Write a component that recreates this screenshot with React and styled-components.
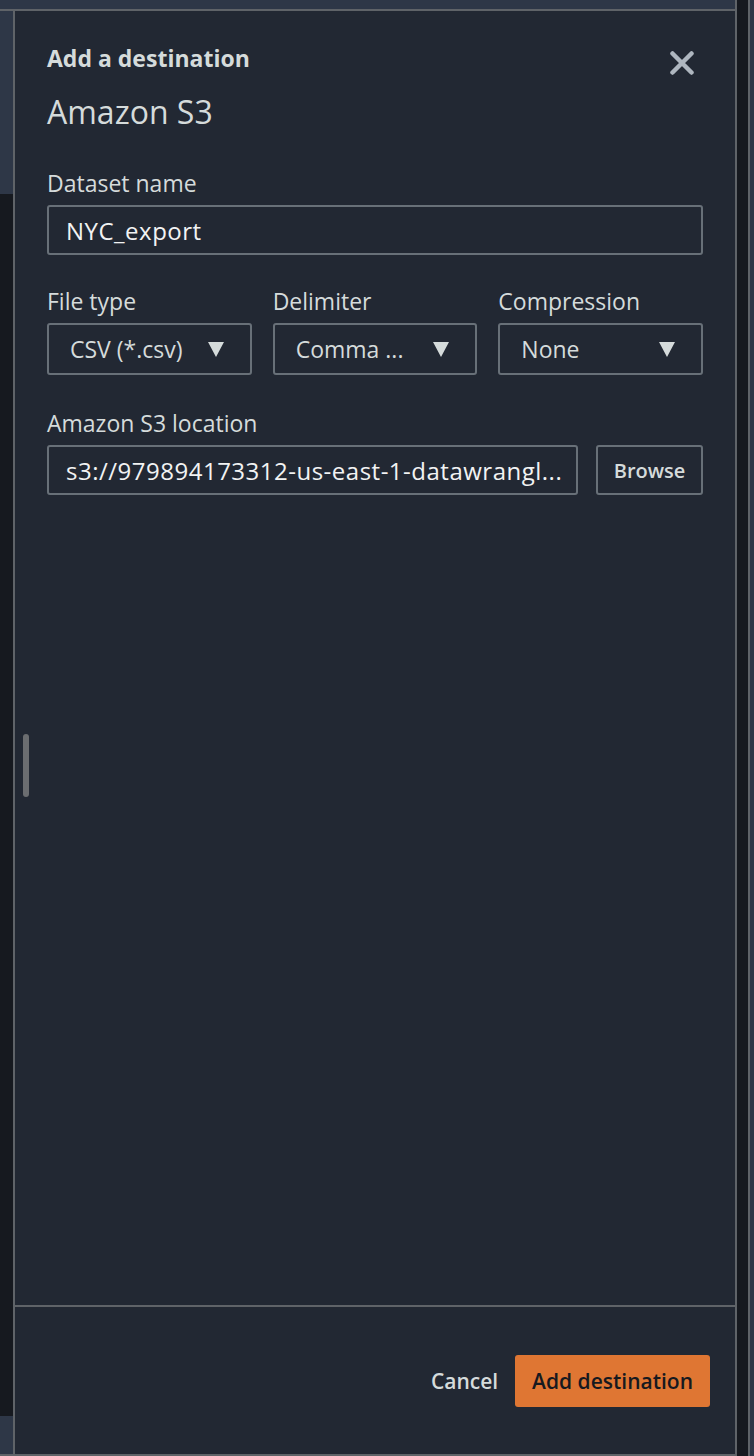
import React from "react"
import styled, { createGlobalStyle } from "styled-components"

const GlobalStyle = createGlobalStyle`
    html, body {
        margin: 0;
        padding: 0;
        background: #16191f;
    }
    * {
        box-sizing: border-box;
    }
`

const Frame = styled.div`
    display: flex;
    width: 754px;
    height: 1456px;
    font-family: "Open Sans", "Noto Sans", sans-serif;
    overflow: hidden;
`

const Main = styled.div`
    display: flex;
    flex-direction: column;
    width: 735px;
    height: 100%;
    border-bottom: 2px solid #5f6368;
`

const TopBand = styled.div`
    height: 11px;
    background: #2e3747;
    border-bottom: 2px solid #5f6368;
    flex-shrink: 0;
`

const Body = styled.div`
    display: flex;
    flex: 1;
    min-height: 0;
`

const Gutter = styled.div`
    display: flex;
    flex-direction: column;
    width: 13px;
    flex-shrink: 0;
`

const GutterSeg = styled.div`
    background: ${p => (p.$dark ? "#16191f" : "#2e3747")};
    height: ${p => (p.$h ? `${p.$h}px` : "auto")};
    flex: ${p => (p.$h ? "none" : 1)};
`

const RightRail = styled.div`
    display: flex;
    flex: 1;
`

const RailLine = styled.div`
    width: 2px;
    background: #5f6368;
`

const RailDark = styled.div`
    width: 11px;
    background: #16191f;
`

const RailSlate = styled.div`
    flex: 1;
    background: #2e3747;
`

const Panel = styled.div`
    position: relative;
    flex: 1;
    display: flex;
    flex-direction: column;
    background: #222833;
    border-left: 2px solid #5f6368;
`

const ResizeHandle = styled.div`
    position: absolute;
    left: 8px;
    top: 723px;
    width: 6px;
    height: 63px;
    border-radius: 3px;
    background: #6b6d70;
`

const Content = styled.div`
    flex: 1;
    padding: 32px 32px 0 32px;
`

const Header = styled.div`
    display: flex;
    justify-content: space-between;
    align-items: flex-start;
`

const Eyebrow = styled.div`
    font-size: 23px;
    font-weight: 700;
    color: #d5dbdb;
    line-height: 30px;
`

const Title = styled.h1`
    margin: 19px 0 0;
    font-size: 32px;
    font-weight: 400;
    color: #d5dbdb;
    line-height: 40px;
`

const CloseButton = styled.button`
    background: none;
    border: none;
    padding: 0;
    margin: 8px 9px 0 0;
    width: 24px;
    height: 24px;
    display: flex;
    cursor: pointer;
`

const Field = styled.div`
    display: flex;
    flex-direction: column;
    gap: 9px;
    margin-top: ${p => p.$mt || 0}px;
    min-width: 0;
`

const Label = styled.label`
    font-size: 23px;
    color: #d5dbdb;
    line-height: 26px;
`

const TextBox = styled.div`
    flex: ${p => (p.$grow ? "1 1 0" : "none")};
    height: 50px;
    border: 2px solid #687078;
    border-radius: 3px;
    padding: 0 8px 0 17px;
    display: flex;
    align-items: center;
    font-size: 24px;
    letter-spacing: 0.5px;
    color: #f2f3f3;
    white-space: nowrap;
    overflow: hidden;
    min-width: 0;
`

const Ellipsis = styled.span`
    overflow: hidden;
    text-overflow: ellipsis;
    white-space: nowrap;
`

const SelectRow = styled.div`
    display: grid;
    grid-template-columns: repeat(3, 1fr);
    gap: 21px;
    margin-top: 33px;
`

const SelectBox = styled.div`
    height: 52px;
    border: 2px solid #687078;
    border-radius: 3px;
    padding: 0 26px 0 21px;
    display: flex;
    align-items: center;
    justify-content: space-between;
    gap: 8px;
    font-size: 23px;
    color: #d5dbdb;
`

const Caret = styled.span`
    width: 0;
    height: 0;
    border-left: 8.5px solid transparent;
    border-right: 8.5px solid transparent;
    border-top: 15px solid #d5dbdb;
    flex-shrink: 0;
`

const LocationRow = styled.div`
    display: flex;
    gap: 18px;
`

const BrowseButton = styled.button`
    flex-shrink: 0;
    width: 107px;
    height: 50px;
    background: transparent;
    border: 2px solid #687078;
    border-radius: 3px;
    font-family: inherit;
    font-size: 20px;
    font-weight: 600;
    color: #d5dbdb;
`

const Footer = styled.div`
    height: 149px;
    border-top: 2px solid #5f6368;
    display: flex;
    justify-content: flex-end;
    align-items: flex-start;
    gap: 17px;
    padding: 48px 25px 0 0;
`

const CancelButton = styled.button`
    background: none;
    border: none;
    padding: 0;
    height: 52px;
    font-family: inherit;
    font-size: 21px;
    font-weight: 600;
    color: #d5dbdb;
`

const PrimaryButton = styled.button`
    height: 52px;
    padding: 0 17px;
    background: #df7633;
    border: none;
    border-radius: 3px;
    font-family: inherit;
    font-size: 21px;
    font-weight: 600;
    color: #16191f;
`

const CloseIcon = () => (
    <svg width="24" height="24" viewBox="0 0 24 24">
        <path d="M2.5 2.5 L21.5 21.5 M21.5 2.5 L2.5 21.5" stroke="#aeb6bf" strokeWidth="4.5" strokeLinecap="round" />
    </svg>
)

const Select = ({ label, value }) => (
    <Field>
        <Label>{label}</Label>
        <SelectBox>
            <Ellipsis>{value}</Ellipsis>
            <Caret />
        </SelectBox>
    </Field>
)

export default function App() {
    return (
        <>
            <GlobalStyle />
            <Frame>
                <Main>
                    <TopBand />
                    <Body>
                        <Gutter>
                            <GutterSeg $h={183} />
                            <GutterSeg $dark />
                            <GutterSeg $h={38} />
                        </Gutter>
                        <Panel>
                            <ResizeHandle />
                            <Content>
                                <Header>
                                    <div>
                                        <Eyebrow>Add a destination</Eyebrow>
                                        <Title>Amazon S3</Title>
                                    </div>
                                    <CloseButton aria-label="Close">
                                        <CloseIcon />
                                    </CloseButton>
                                </Header>

                                <Field $mt={38}>
                                    <Label>Dataset name</Label>
                                    <TextBox>NYC_export</TextBox>
                                </Field>

                                <SelectRow>
                                    <Select label="File type" value="CSV (*.csv)" />
                                    <Select label="Delimiter" value="Comma ..." />
                                    <Select label="Compression" value="None" />
                                </SelectRow>

                                <Field $mt={35}>
                                    <Label>Amazon S3 location</Label>
                                    <LocationRow>
                                        <TextBox $grow>s3://979894173312-us-east-1-datawrangl...</TextBox>
                                        <BrowseButton>Browse</BrowseButton>
                                    </LocationRow>
                                </Field>
                            </Content>
                            <Footer>
                                <CancelButton>Cancel</CancelButton>
                                <PrimaryButton>Add destination</PrimaryButton>
                            </Footer>
                        </Panel>
                    </Body>
                </Main>
                <RightRail>
                    <RailLine />
                    <RailDark />
                    <RailLine />
                    <RailSlate />
                </RightRail>
            </Frame>
        </>
    )
}
